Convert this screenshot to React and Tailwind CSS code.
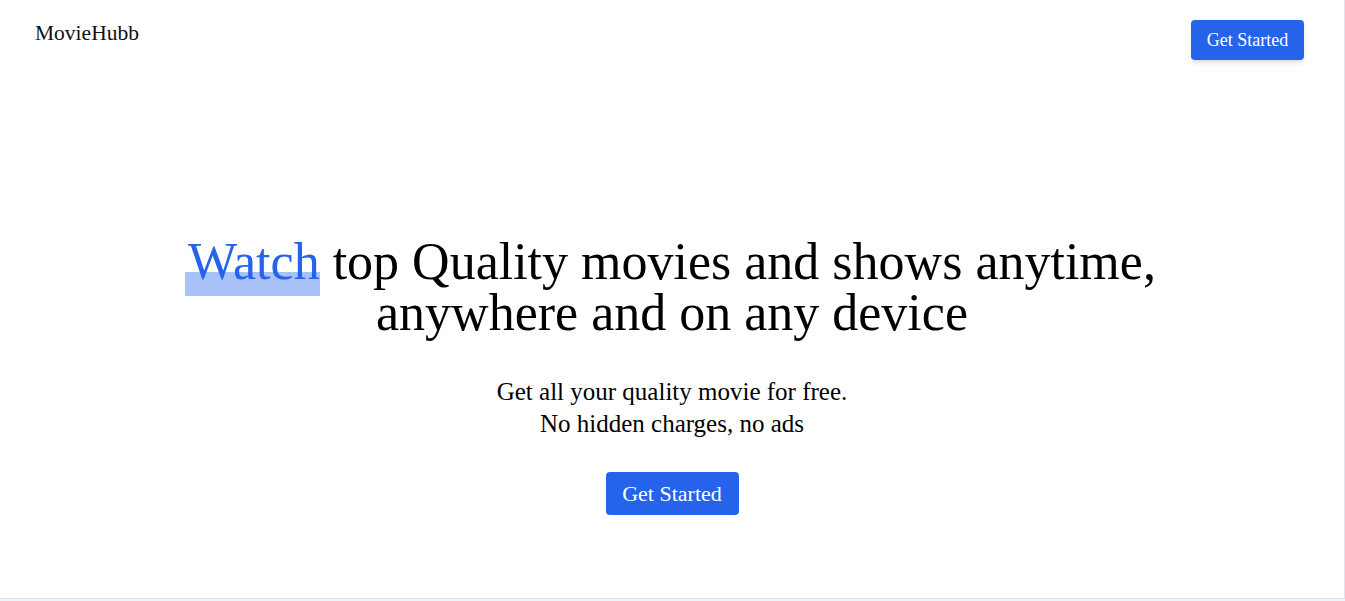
import React from "react";

export default function App() {
  const serif = { fontFamily: '"Liberation Serif", "DejaVu Serif", serif' };
  return (
    <div className="w-[1345px] bg-[#eef4fc]" style={serif}>
      <div className="h-[599px] bg-white border-r border-b border-[#dfe3ea] flex flex-col">
        <header className="flex items-start justify-between pl-[35px] pr-[40px] pt-[20px]">
          <div className="text-[21.5px] leading-[26px] text-[#111]">MovieHubb</div>
          <button className="h-[40px] w-[113px] rounded-[4px] bg-[#2563eb] text-white text-[18px] shadow-md">
            Get Started
          </button>
        </header>
        <main className="flex flex-col items-center mt-[176px]">
          <h1 className="text-center text-[52px] leading-[51px] text-black">
            <span className="relative inline-block">
              <span className="absolute -left-[3px] right-0 top-[36px] h-[24px] bg-[#2563eb]/40"></span>
              <span className="relative text-[#2563eb]">Watch</span>
            </span>{" "}
            top Quality movies and shows anytime,
            <br />
            anywhere and on any device
          </h1>
          <p className="mt-[38px] text-center text-[25px] leading-[32px] text-black">
            Get all your quality movie for free.
            <br />
            No hidden charges, no ads
          </p>
          <button className="mt-[32px] h-[43px] w-[133px] rounded-[4px] bg-[#2563eb] text-white text-[22px]">
            Get Started
          </button>
        </main>
      </div>
      <div className="h-[2px]"></div>
    </div>
  );
}
